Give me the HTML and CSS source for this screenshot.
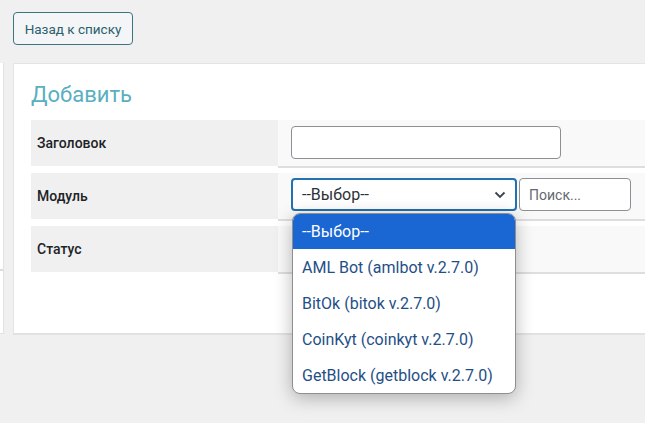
FILE: index.html
```html
<!DOCTYPE html>
<html lang="ru">
<head>
<meta charset="utf-8">
<link rel="stylesheet" href="styles.css">
</head>
<body>
<div class="top">
  <button class="back-btn">Назад к списку</button>
</div>
<div class="main-row">
  <div class="side-strip"><div class="strip-line"></div></div>
  <div class="panel">
    <h2 class="panel-title">Добавить</h2>
    <div class="form-grid">
      <div class="label-cell">Заголовок</div>
      <div class="value-cell"><input class="text-input" type="text"></div>
      <div class="label-cell">Модуль</div>
      <div class="value-cell module-cell">
        <div class="select-wrap">
          <div class="select-box">
            <span>--Выбор--</span>
            <svg class="chevron" width="12" height="8" viewBox="0 0 12 8"><polyline points="1.5,1.5 6,6 10.5,1.5" fill="none" stroke="#3c434a" stroke-width="1.8"/></svg>
          </div>
          <div class="dropdown">
            <div class="option selected">--Выбор--</div>
            <div class="option">AML Bot (amlbot v.2.7.0)</div>
            <div class="option">BitOk (bitok v.2.7.0)</div>
            <div class="option">CoinKyt (coinkyt v.2.7.0)</div>
            <div class="option">GetBlock (getblock v.2.7.0)</div>
          </div>
        </div>
        <input class="search-input" type="text" placeholder="Поиск...">
      </div>
      <div class="label-cell">Статус</div>
      <div class="value-cell"></div>
    </div>
  </div>
</div>
</body>
</html>
```

FILE: styles.css
```css
* { box-sizing: border-box; }
html, body { margin: 0; padding: 0; }
body {
  background: #f0f0f1;
  font-family: Roboto, "Liberation Sans", sans-serif;
  width: 645px;
  height: 423px;
  overflow: hidden;
}
.top {
  padding: 12px 13px 0;
  height: 63px;
}
.back-btn {
  height: 33px;
  width: 120px;
  padding: 0;
  border: 1px solid #3f7384;
  border-radius: 4px;
  background: #f3f5f6;
  color: #2c5f6e;
  font-family: Roboto, "Liberation Sans", sans-serif;
  font-size: 13.5px;
}
.main-row {
  display: flex;
  gap: 9px;
  align-items: flex-start;
}
.side-strip {
  width: 4px;
  height: 271px;
  background: #fff;
  border-right: 1px solid #e2e2e2;
  border-bottom: 1px solid #e2e2e2;
  flex: none;
  padding-top: 206px;
}
.strip-line {
  height: 2px;
  background: #dcdcdc;
}
.panel {
  flex: none;
  width: 660px;
  height: 272px;
  background: #fff;
  border: 1px solid #e4e4e4;
  border-bottom: 2px solid #e2e2e2;
  border-right: none;
  padding: 16px 0 0 17px;
}
.panel-title {
  margin: 0 0 10px;
  font-size: 22px;
  line-height: 30px;
  font-weight: 400;
  color: #5aafbf;
}
.form-grid {
  display: grid;
  grid-template-columns: 247px 1fr;
  grid-auto-rows: 46px;
  row-gap: 7px;
}
.label-cell {
  background: #f0f0f0;
  display: flex;
  align-items: center;
  padding-left: 6px;
  font-size: 14px;
  font-weight: 500;
  color: #1d2327;
}
.value-cell {
  background: #f9f9f9;
  border-bottom: 2px solid #dedede;
  height: 48px;
  display: flex;
  align-items: center;
  padding-left: 13px;
  gap: 2px;
}
.module-cell { padding-bottom: 3px; }
.text-input {
  width: 270px;
  height: 33px;
  border: 1px solid #8c8f94;
  border-radius: 4px;
  background: #fff;
  margin-bottom: 2px;
}
.select-wrap {
  position: relative;
}
.select-box {
  width: 226px;
  height: 33px;
  border: 2px solid #2271b1;
  border-radius: 4px;
  background: #fff;
  display: flex;
  align-items: center;
  justify-content: space-between;
  padding: 0 9px 0 9px;
  font-size: 16px;
  color: #2c3338;
}
.chevron { display: block; margin-top: 1px; }
.search-input {
  width: 112px;
  height: 33px;
  border: 1px solid #8c8f94;
  border-radius: 4px;
  background: #fff;
  padding: 0 9px;
  font-family: Roboto, "Liberation Sans", sans-serif;
  font-size: 14px;
}
.search-input::placeholder { color: #646970; }
.dropdown {
  position: absolute;
  top: 35px;
  left: 1px;
  width: 224px;
  background: #fff;
  border: 1px solid #8f8f8f;
  border-radius: 8px;
  box-shadow: 0 4px 18px rgba(0,0,0,0.28);
  overflow: hidden;
  z-index: 10;
}
.option {
  height: 36px;
  display: flex;
  align-items: center;
  padding-left: 9px;
  font-size: 16px;
  color: #1f4f86;
  white-space: nowrap;
}
.option.selected {
  background: #1a66d2;
  color: #fff;
  height: 35px;
}
```
